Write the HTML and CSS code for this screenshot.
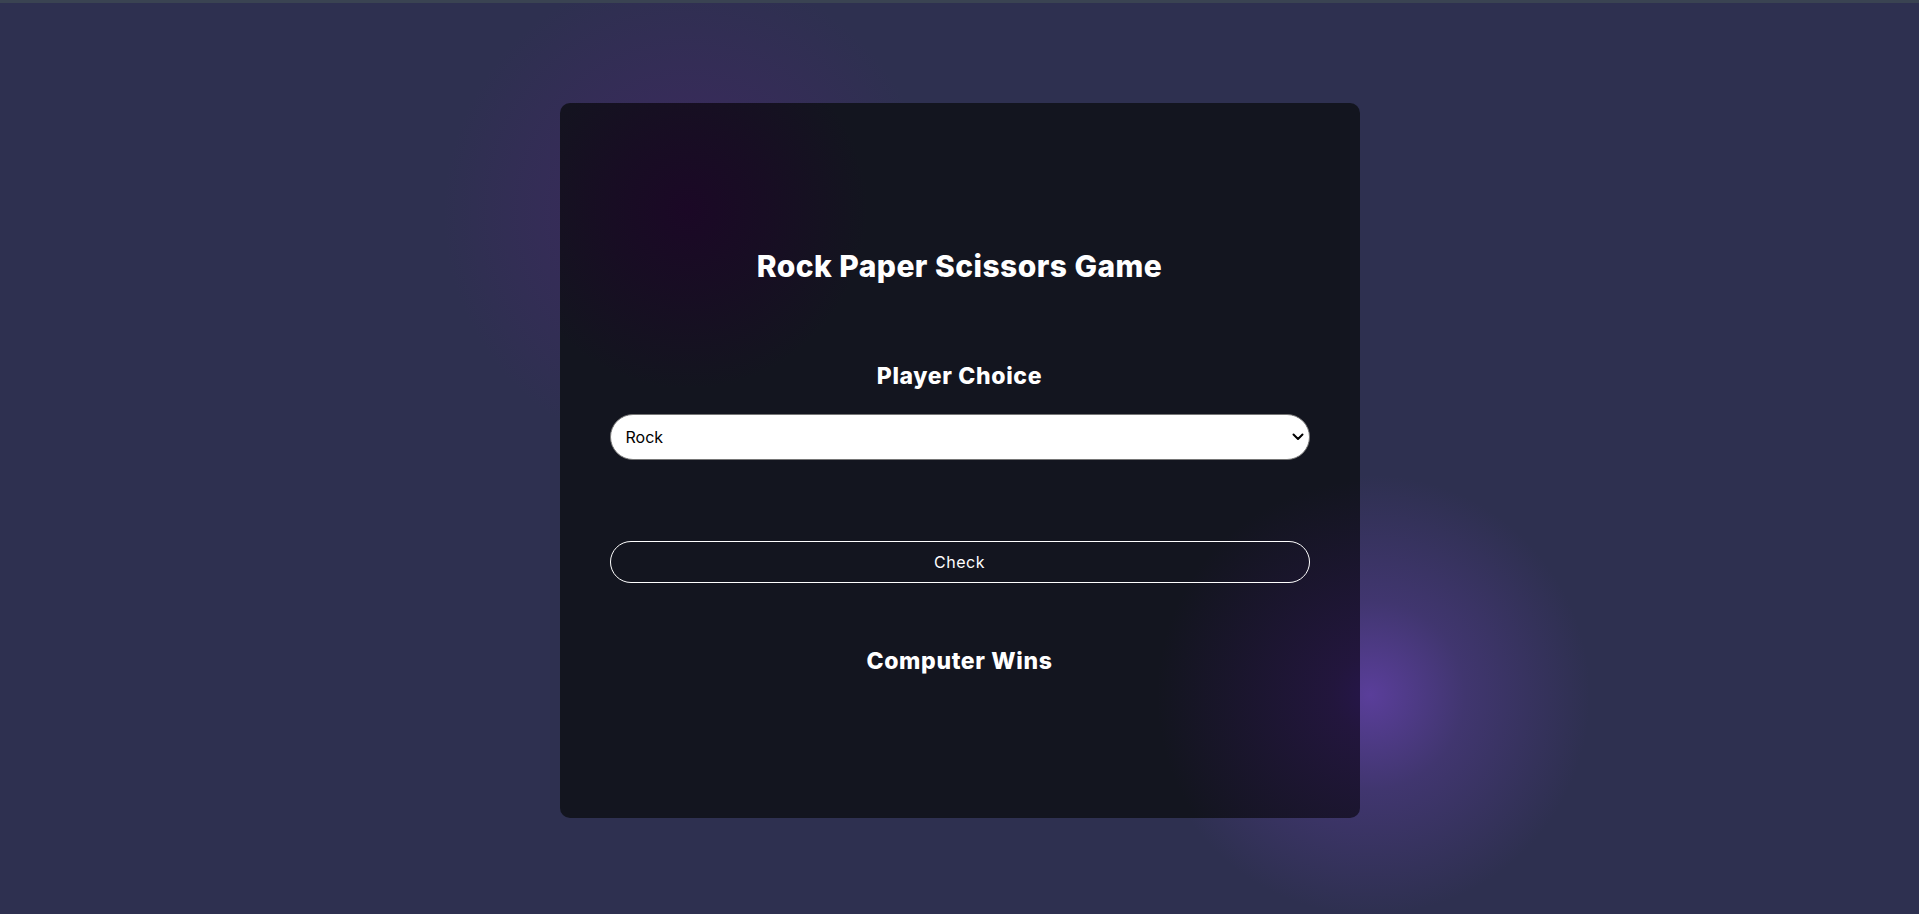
FILE: index.html
```html
<!DOCTYPE html>
<html lang="en">
<head>
<meta charset="utf-8">
<title>Rock Paper Scissors Game</title>
<link rel="stylesheet" href="styles.css">
</head>
<body>
<div class="topbar"></div>
<main class="page">
  <section class="card">
    <h1 class="title">Rock Paper Scissors Game</h1>
    <h2 class="label">Player Choice</h2>
    <div class="select-wrap">
      <select class="choice">
        <option>Rock</option>
        <option>Paper</option>
        <option>Scissors</option>
      </select>
      <svg class="chevron" width="12" height="8" viewBox="0 0 12 8" aria-hidden="true">
        <path d="M1.5 1.5 L6 6 L10.5 1.5" fill="none" stroke="#000" stroke-width="2" stroke-linecap="round" stroke-linejoin="round"/>
      </svg>
    </div>
    <button class="check" type="button">Check</button>
    <h2 class="result">Computer Wins</h2>
  </section>
</main>
</body>
</html>
```
FILE: styles.css
```css
html, body {
  margin: 0;
  padding: 0;
  height: 100%;
  overflow: hidden;
}

body {
  background: #2e3050;
  font-family: "Inter", "Noto Sans", sans-serif;
  color: #fff;
}

.topbar {
  height: 3px;
  background: #3a4352;
}

.page {
  box-sizing: border-box;
  min-height: 911px;
  display: flex;
  justify-content: center;
  align-items: flex-start;
  padding-top: 100px;
  background:
    radial-gradient(circle at 688px 210px, rgba(78, 32, 108, 0.5) 0, rgba(70, 36, 105, 0.34) 115px, rgba(70, 36, 105, 0) 245px),
    radial-gradient(circle at 1370px 692px, #5a3e9a 0, rgba(90, 62, 154, 0.42) 95px, rgba(90, 62, 154, 0) 220px),
    #2e3050;
}

.card {
  box-sizing: border-box;
  width: 800px;
  padding: 145px 50px 143px;
  border-radius: 10px;
  display: flex;
  flex-direction: column;
  align-items: stretch;
  text-align: center;
  background:
    radial-gradient(circle at 128px 107px, #1b0826 0, rgba(27, 8, 38, 0.6) 80px, rgba(27, 8, 38, 0) 180px),
    radial-gradient(circle at 812px 592px, #26164a 0, rgba(38, 22, 68, 0.8) 40px, rgba(38, 22, 68, 0) 215px),
    #13151f;
}

.title {
  margin: 0;
  font-size: 30px;
  line-height: 36px;
  font-weight: 800;
  letter-spacing: 0.45px;
}

.label,
.result {
  font-size: 23px;
  line-height: 28px;
  font-weight: 800;
  letter-spacing: 0.65px;
}

.label {
  margin: 78px 0 0;
}

.select-wrap {
  position: relative;
  margin-top: 24px;
}

.choice {
  display: block;
  box-sizing: border-box;
  width: 100%;
  height: 46px;
  margin: 0;
  padding: 0 30px 0 15px;
  border: 1px solid #767676;
  border-radius: 23px;
  background: #fff;
  color: #000;
  font-family: "Inter", "Noto Sans", sans-serif;
  font-size: 16px;
  appearance: none;
  -webkit-appearance: none;
  outline: none;
}

.chevron {
  position: absolute;
  right: 6px;
  top: 50%;
  transform: translateY(-50%);
  pointer-events: none;
}

.check {
  display: block;
  box-sizing: border-box;
  width: 100%;
  height: 42px;
  margin: 81px 0 0;
  padding: 0;
  border: 1px solid #fff;
  border-radius: 21px;
  background: transparent;
  color: #fff;
  font-family: "Inter", "Noto Sans", sans-serif;
  font-size: 16px;
  letter-spacing: 0.5px;
  cursor: pointer;
}

.result {
  margin: 64px 0 0;
}
```
